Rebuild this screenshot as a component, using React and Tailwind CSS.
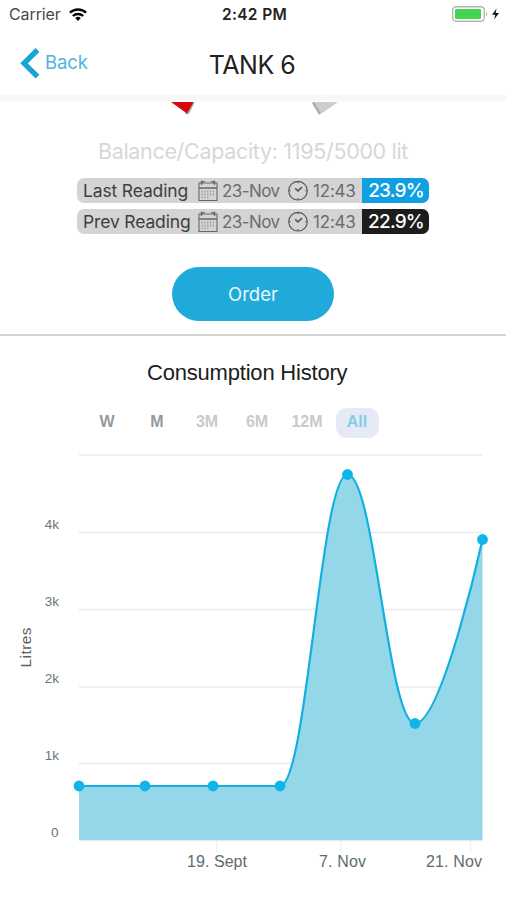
import React from "react";

function StatusBar() {
  return (
    <div className="flex h-7 items-center px-2 text-[16px] leading-7">
      <div className="flex flex-1 items-center gap-[8px] text-[#4a4a4a]">
        <span className="pl-px tracking-[-0.1px]">Carrier</span>
        <svg width="18" height="13" viewBox="0 0 18 13" fill="none" stroke="#050505" strokeWidth="2.3">
          <path d="M0.9 4.7a11.8 11.8 0 0 1 16.2 0" />
          <path d="M3.8 8a7.7 7.7 0 0 1 10.4 0" />
          <path d="M9 13 6.2 10.1a4 4 0 0 1 5.6 0Z" fill="#050505" stroke="none" />
        </svg>
      </div>
      <span className="pl-[3px] pt-[2px] text-[15.5px] font-semibold tracking-[0.35px] text-[#222]">2:42 PM</span>
      <div className="flex flex-1 justify-end">
        <svg width="48" height="18" viewBox="0 0 48 18" className="translate-x-[2px]">
          <rect x="0.7" y="1.7" width="31.6" height="14.6" rx="3.5" fill="#fff" stroke="#b4b4b4" strokeWidth="1.4" />
          <rect x="3" y="4" width="26" height="10" rx="1" fill="#43d551" />
          <path d="M34 6.7q2.4 2.3 0 4.6Z" fill="#b4b4b4" />
          <path d="M44.6 3.5 40 9.8h3.3l-1.2 4.7L47 8h-3.4Z" fill="#111" />
        </svg>
      </div>
    </div>
  );
}

function Header() {
  return (
    <header className="grid h-[67px] grid-cols-[1fr_auto_1fr] pt-5">
      <div className="flex items-start pl-[19px] text-[#4fb4de]">
        <svg width="22" height="31" viewBox="0 0 22 31" fill="none" stroke="#16a5d8" strokeWidth="5.3">
          <path d="M18.5 2 5 15.3 18.5 28.7" />
        </svg>
        <span className="pl-[4px] text-[18.5px] leading-7 tracking-[-0.1px]">Back</span>
      </div>
      <h1 className="pr-[2px] pt-[2px] text-[25px] leading-[31px] tracking-[-0.5px] text-[#222]">TANK 6</h1>
    </header>
  );
}

function CalendarIcon() {
  return (
    <svg width="21" height="22" viewBox="0 0 21 22" fill="none" stroke="#666" strokeWidth="1.1">
      <path d="M2 3h18v17.5H2Z" />
      <path d="M2 8h18" strokeWidth="1.5" />
      <path d="M5 1.7h2.5M14.5 1.7H17M4.5.7v4M17.5.7v4" strokeWidth="1.5" />
      <path d="M4.5 11.5h13M4.5 14.5h13M4.5 17.3h8" stroke="#a0a0a0" strokeDasharray="1.3 1.5" strokeWidth="1.8" />
    </svg>
  );
}

function ClockIcon() {
  return (
    <svg width="21" height="21" viewBox="0 0 21 21" fill="none" stroke="#555" strokeWidth="1.1">
      <circle cx="11" cy="10.7" r="9.3" />
      <path d="m8.2 8.4 2.8 2.5 4-3.8" strokeWidth="1.5" />
      <path d="M11 1.7v1.6M11 18.1v1.6M2 10.7h1.6M18.4 10.7H20" />
    </svg>
  );
}

function Reading({ label, value, color }) {
  return (
    <div className="flex h-[25px] w-[352px] items-center overflow-hidden rounded-[7px] bg-[#d4d4d4] text-[#6c6c6c]">
      <span className="w-[120px] pl-[6px] pt-[2px] text-[17.5px] tracking-[-0.15px] text-[#404040]">{label}</span>
      <CalendarIcon />
      <span className="w-[69px] pl-[4px] pt-[2px] text-[17px] tracking-[-0.55px]">23-Nov</span>
      <ClockIcon />
      <span className="flex-1 pl-[5px] pt-[2px] text-[17px] tracking-[-0.2px]">12:43</span>
      <span className={"flex h-full w-[67px] items-center justify-center pl-px pt-[2px] text-[19px] font-medium tracking-[-0.8px] text-white " + color}>{value}</span>
    </div>
  );
}

const ranges = [
  { label: "W", className: "text-[#929b9f]" },
  { label: "M", className: "text-[#929b9f]" },
  { label: "3M", className: "text-[#cacaca]" },
  { label: "6M", className: "text-[#cacaca]" },
  { label: "12M", className: "text-[#cacaca]" },
  { label: "All", className: "bg-[#e5eaf6] text-[#86cbe5]" },
];

const points = [[79, 336], [145, 336], [213, 336], [280, 336], [347.5, 24.5], [415, 273.5], [482.5, 89.5]];
const curve = "M79 336H280C307 336 320.5 24.5 347.5 24.5C374.5 24.5 388 273.5 415 273.5C442 273.5 482.5 89.5 482.5 89.5";

function Chart() {
  return (
    <svg className="block" width="506" height="450" viewBox="0 0 506 450" fontFamily="'Liberation Sans', Arial, sans-serif">
      {[5, 82.5, 159.5, 237, 313.5, 390.5].map((y) => (
        <path key={y} d={`M79 ${y}H482.5`} stroke="#e5ebed" strokeWidth="1.6" />
      ))}
      <path d="M217 391v12M341 391v12M470.5 391v12" stroke="#e8eff1" strokeWidth="1.3" />
      <path d={curve + "V390H79Z"} fill="#94d7e8" />
      <path d={curve} fill="none" stroke="#12b0df" strokeWidth="2.2" />
      {points.map(([x, y]) => (
        <circle key={x} cx={x} cy={y} r="5.4" fill="#0eb5e6" />
      ))}
      <g fill="#6b7477" fontSize="13.5" textAnchor="end">
        <text x="59" y="79">4k</text>
        <text x="59" y="156">3k</text>
        <text x="59" y="233">2k</text>
        <text x="59" y="310">1k</text>
        <text x="58.5" y="387">0</text>
      </g>
      <g fill="#5d6c70" fontSize="16" textAnchor="middle">
        <text x="217" y="417" textLength="60">19. Sept</text>
        <text x="342.5" y="417" textLength="47">7. Nov</text>
        <text x="454" y="417" textLength="56">21. Nov</text>
      </g>
      <text transform="translate(31 197.5) rotate(-90)" fill="#606060" fontSize="15.5" textAnchor="middle" textLength="40">Litres</text>
    </svg>
  );
}

export default function App() {
  return (
    <main className="h-[900px] w-[506px] overflow-hidden bg-white font-['Inter','Liberation_Sans',sans-serif]">
      <StatusBar />
      <Header />
      <div className="h-[6px] bg-[#f7f7f7]" />
      <section className="flex h-[235px] flex-col items-center border-b-2 border-[#d5d5d5]">
        <svg width="172" height="14" viewBox="0 0 172 14">
          <path d="m25.5 1 2 1-6 11.5-4-1Z" fill="#aaa" />
          <path d="M4 1H26.5L20 12.5Z" fill="#d40809" />
          <path d="m145 2 7 11.5 4-2L171 1h-24Z" fill="#ccc" />
          <path d="m145 2 7 11.5 2-1L147 1Z" fill="#aaa" />
        </svg>
        <p className="mt-[22px] text-[21.5px] leading-7 tracking-[-0.32px] text-[#d7d7d7]">Balance/Capacity: 1195/5000 lit</p>
        <div className="mt-[13px] flex flex-col gap-[6px]">
          <Reading label="Last Reading" value="23.9%" color="bg-[#119fe4]" />
          <Reading label="Prev Reading" value="22.9%" color="bg-[#1d1d1d]" />
        </div>
        <button className="mt-[33px] h-[54px] w-[162px] shrink-0 rounded-full bg-[#1faada] pt-[2px] text-[18.5px] text-[#e9f8fd]">Order</button>
      </section>
      <section>
        <h2 className="h-[72px] pl-[147px] pt-[21px] font-['Liberation_Sans',Arial,sans-serif] text-[22px] leading-[32px] tracking-[-0.2px] text-[#202020]">Consumption History</h2>
        <nav className="flex h-[42px] pl-[82px] font-['Liberation_Sans',Arial,sans-serif] text-[16px] font-bold">
          {ranges.map(({ label, className }) => (
            <button key={label} className="h-[30px] w-[50px]">
              <span className={"mx-auto flex h-[30px] w-[43px] items-center justify-center rounded-[11px] pb-[2px] " + className}>{label}</span>
            </button>
          ))}
        </nav>
        <Chart />
      </section>
    </main>
  );
}
